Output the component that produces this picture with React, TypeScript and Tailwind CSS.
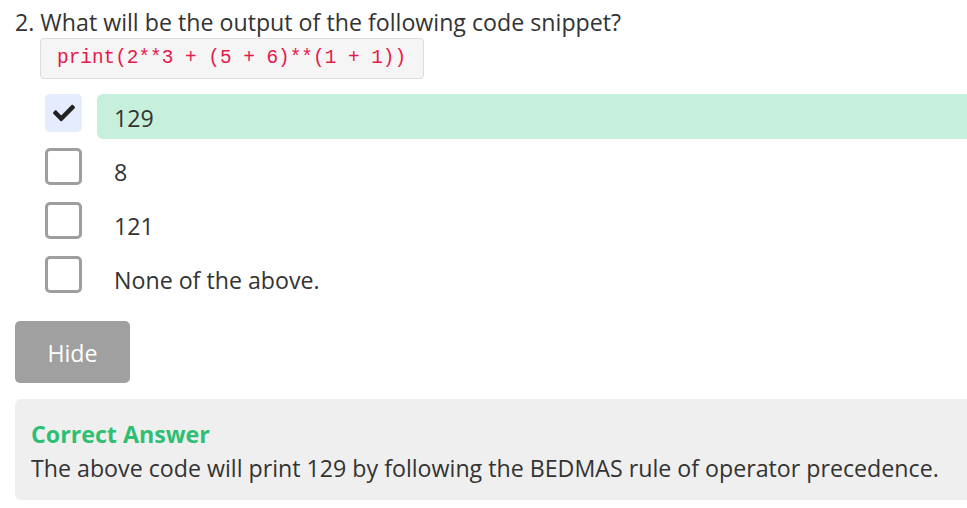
import React, { useState } from "react";

const options = ["129", "8", "121", "None of the above."];

function CheckIcon() {
  return (
    <svg viewBox="0 0 512 512" className="w-[22px] h-[22px]" fill="#222">
      <path d="M173.9 439.4l-166.4-166.4c-10-10-10-26.2 0-36.2l36.2-36.2c10-10 26.2-10 36.2 0L192 312.7 432.1 72.6c10-10 26.2-10 36.2 0l36.2 36.2c10 10 10 26.2 0 36.2L210.1 439.4c-10 10-26.2 10-36.2 0z" />
    </svg>
  );
}

export default function App() {
  const [shown, setShown] = useState(true);
  const selected = 0;

  return (
    <div className="w-[967px] h-[508px] overflow-hidden bg-white pl-[15px] pt-[6px] text-[#333] font-['Open_Sans',sans-serif]">
      {/* Question */}
      <h2 className="text-[23.2px] leading-[32px] text-[#333]">2. What will be the output of the following code snippet?</h2>

      {/* Code snippet */}
      <div className="ml-[25px] w-[384px] h-[41px] flex items-center pl-[16px] bg-[#f5f5f5] border border-[#dcdcdc] rounded-[4px]">
        <code className="font-['Liberation_Mono',monospace] text-[19.4px] text-[#e6194b]">
          print(2**3 + (5 + 6)**(1 + 1))
        </code>
      </div>

      {/* Options */}
      <div className="mt-[15px] flex flex-col gap-[9px]">
        {options.map((opt, i) => {
          const isSel = i === selected;
          return (
            <div key={opt} className="flex items-start h-[45px]">
              <div className="ml-[30px] w-[37px] shrink-0">
                {isSel ? (
                  <div className="w-[37px] h-[38px] rounded-[5px] bg-[#e4ecfd] flex items-center justify-center">
                    <CheckIcon />
                  </div>
                ) : (
                  <div className="w-[37px] h-[37px] rounded-[5px] border-[3px] border-[#9e9e9e] bg-white" />
                )}
              </div>
              <div
                className={
                  "ml-[15px] flex-1 h-[45px] flex items-center pl-[17px] pt-[3px] text-[23.2px] rounded-l-[6px] " +
                  (isSel ? "bg-[#c6efdc]" : "")
                }
              >
                {opt}
              </div>
            </div>
          );
        })}
      </div>

      {/* Hide button */}
      <button
        onClick={() => setShown(!shown)}
        className="mt-[20px] w-[115px] h-[62px] pt-[2px] bg-[#a0a0a0] text-white text-[23.2px] rounded-[5px] cursor-pointer"
      >
        {shown ? "Hide" : "Show"}
      </button>

      {/* Answer */}
      {shown && (
        <div className="mt-[16px] h-[101px] bg-[#efefef] rounded-l-[6px] pl-[16px] pt-[19px]">
          <div className="text-[23.2px] font-bold text-[#2ebf73] leading-[32px]">Correct Answer</div>
          <div className="text-[23.2px] leading-[36px] text-[#333]">
            The above code will print 129 by following the BEDMAS rule of operator precedence.
          </div>
        </div>
      )}
    </div>
  );
}
